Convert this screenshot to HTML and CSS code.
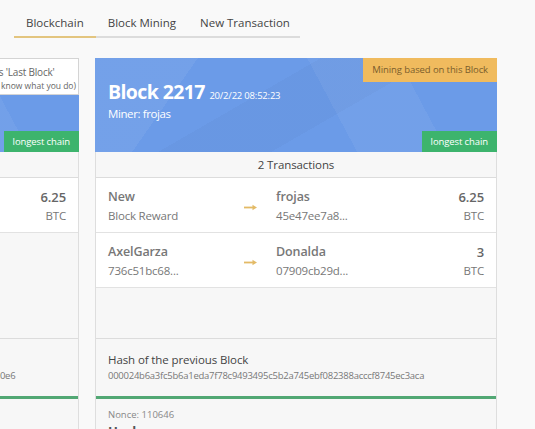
FILE: index.html
```html
<!DOCTYPE html>
<html lang="en">
<head>
    <meta charset="UTF-8">
    <meta name="viewport" content="width=device-width, initial-scale=1.0">
    <title>Blockchain</title>
    <link rel="stylesheet" href="styles.css">
</head>
<body>
    <nav class="tabs">
        <a class="tab active" href="#">Blockchain</a>
        <a class="tab" href="#">Block Mining</a>
        <a class="tab" href="#">New Transaction</a>
    </nav>

    <div class="chain">
        <!-- previous block -->
        <div class="block">
            <div class="block-head">
                <div class="set-last">Set as 'Last Block'<small>(only if you know what you do)</small></div>
                <h2>Block 2216 <span class="time">20/2/22 08:41:07</span></h2>
                <div class="miner">Miner: donalda</div>
                <span class="badge longest">longest chain</span>
            </div>
            <div class="tx-count">1 Transaction</div>
            <div class="tx-list">
                <div class="tx">
                    <div class="party"><b>New</b><span>Block Reward</span></div>
                    <svg class="arrow" viewBox="0 0 13 7"><path d="M0 3.5h9.5"/><polygon points="8.5,0.8 13,3.5 8.5,6.2"/></svg>
                    <div class="party"><b>Donalda</b><span>07909cb29d...</span></div>
                    <div class="amount"><b>6.25</b><span>BTC</span></div>
                </div>
            </div>
            <div class="prev-hash">
                <div class="label">Hash of the previous Block</div>
                <div class="hash">00001d7a3c9b52e8d4a6c0d19b7e3d5a28c4d6e0b9d1a3c5e7d2b4d6a8c00e6</div>
            </div>
            <div class="proof">
                <div class="nonce">Nonce: 48213</div>
                <div class="hash-title">Hash</div>
            </div>
        </div>

        <!-- current block -->
        <div class="block">
            <div class="block-head">
                <span class="badge mining">Mining based on this Block</span>
                <h2>Block 2217 <span class="time">20/2/22 08:52:23</span></h2>
                <div class="miner">Miner: frojas</div>
                <span class="badge longest">longest chain</span>
            </div>
            <div class="tx-count">2 Transactions</div>
            <div class="tx-list">
                <div class="tx">
                    <div class="party"><b>New</b><span>Block Reward</span></div>
                    <svg class="arrow" viewBox="0 0 13 7"><path d="M0 3.5h9.5"/><polygon points="8.5,0.8 13,3.5 8.5,6.2"/></svg>
                    <div class="party"><b>frojas</b><span>45e47ee7a8...</span></div>
                    <div class="amount"><b>6.25</b><span>BTC</span></div>
                </div>
                <div class="tx">
                    <div class="party"><b>AxelGarza</b><span>736c51bc68...</span></div>
                    <svg class="arrow" viewBox="0 0 13 7"><path d="M0 3.5h9.5"/><polygon points="8.5,0.8 13,3.5 8.5,6.2"/></svg>
                    <div class="party"><b>Donalda</b><span>07909cb29d...</span></div>
                    <div class="amount"><b>3</b><span>BTC</span></div>
                </div>
            </div>
            <div class="prev-hash">
                <div class="label">Hash of the previous Block</div>
                <div class="hash">000024b6a3fc5b6a1eda7f78c9493495c5b2a745ebf082388acccf8745ec3aca</div>
            </div>
            <div class="proof">
                <div class="nonce">Nonce: 110646</div>
                <div class="hash-title">Hash</div>
            </div>
        </div>
    </div>
</body>
</html>
```

FILE: styles.css
```css
body {
    margin: 0;
    font-family: "Open Sans", sans-serif;
    background-color: #f9f9f9;
    color: #555;
    overflow: hidden;
}
.tabs {
    display: flex;
    margin: 0 0 0 14px;
    padding-top: 14px;
}
.tab {
    padding: 0 12px 4px;
    line-height: 18px;
    font-size: 11.5px;
    color: #444;
    text-decoration: none;
    border-bottom: 2px solid #dcdcdc;
}
.tab:last-child {
    padding-right: 10px;
}
.tab.active {
    border-bottom-color: #e3c57f;
}
.chain {
    display: flex;
    gap: 16px;
    margin: 20px 0 0 -323px;
}
.block {
    flex: none;
    width: 402px;
    box-sizing: border-box;
    border: 1px solid #dedede;
    border-top: none;
    background: #f7f7f7;
}
.block-head {
    position: relative;
    height: 94px;
    box-sizing: border-box;
    margin: 0 -1px;
    padding: 22px 13px 0;
    color: white;
    background:
        linear-gradient(125deg, rgba(255,255,255,0.06) 0 22%, transparent 22%),
        linear-gradient(62deg, transparent 58%, rgba(255,255,255,0.05) 58% 78%, transparent 78%),
        linear-gradient(150deg, transparent 40%, rgba(0,0,0,0.025) 40% 60%, transparent 60%),
        #6b9be8;
}
.block-head h2 {
    margin: 0;
    font-size: 19.5px;
    line-height: 24px;
    font-weight: 700;
    letter-spacing: -0.6px;
}
.time {
    font-size: 9.5px;
    font-weight: 400;
    letter-spacing: -0.2px;
}
.miner {
    margin-top: -2px;
    font-size: 11.5px;
    line-height: 16px;
    letter-spacing: -0.4px;
}
.badge {
    position: absolute;
    right: 0;
    font-size: 9.5px;
    padding: 0 9px;
    letter-spacing: -0.1px;
}
.badge.mining {
    top: 0;
    line-height: 24px;
    background: #f0bb5e;
    color: #7a5d2c;
}
.badge.longest {
    bottom: 0;
    line-height: 21px;
    background: #3db46d;
    color: white;
}
.set-last {
    position: absolute;
    top: 0;
    right: 0;
    padding: 6px 2px 1px;
    background: white;
    border: 1px solid #d4d4d4;
    color: #666;
    font-size: 10px;
    line-height: 14px;
    text-align: center;
    letter-spacing: -0.2px;
    white-space: nowrap;
}
.set-last small {
    display: block;
    font-size: 8.5px;
    letter-spacing: 0;
}
.tx-count {
    line-height: 25px;
    text-align: center;
    font-size: 11.5px;
    color: #444;
    border-bottom: 1px solid #dcdcdc;
    letter-spacing: -0.1px;
}
.tx-list {
    height: 160px;
}
.tx {
    display: grid;
    grid-template-columns: 128px 40px 1fr auto;
    align-items: center;
    padding: 10px 12px 6px;
    background: white;
    border-bottom: 1px solid #e2e2e2;
    color: #777;
}
.party b, .amount b {
    display: block;
    font-size: 12.5px;
    line-height: 18px;
    font-weight: 600;
    letter-spacing: -0.1px;
}
.party span, .amount span {
    display: block;
    font-size: 11.5px;
    line-height: 20px;
    letter-spacing: -0.2px;
}
.amount {
    text-align: right;
}
.amount b {
    font-size: 13px;
    color: #666;
}
.arrow {
    width: 13px;
    height: 7px;
    margin-left: 8px;
}
.arrow path {
    stroke: #e3ba66;
    stroke-width: 1.8;
}
.arrow polygon {
    fill: #e3ba66;
}
.prev-hash {
    padding: 13px 12px 12px;
    border-top: 1px solid #dcdcdc;
    border-bottom: 3px solid #52a874;
}
.label {
    font-size: 11.5px;
    line-height: 16px;
    color: #444;
    letter-spacing: -0.1px;
}
.hash {
    font-size: 9.5px;
    line-height: 16px;
    color: #777;
    letter-spacing: -0.25px;
    white-space: nowrap;
}
.proof {
    padding: 9px 12px;
}
.nonce {
    font-size: 9.5px;
    line-height: 14px;
    color: #888;
}
.hash-title {
    margin-top: 0;
    font-size: 13px;
    line-height: 18px;
    font-weight: 700;
    color: #555;
}
```
